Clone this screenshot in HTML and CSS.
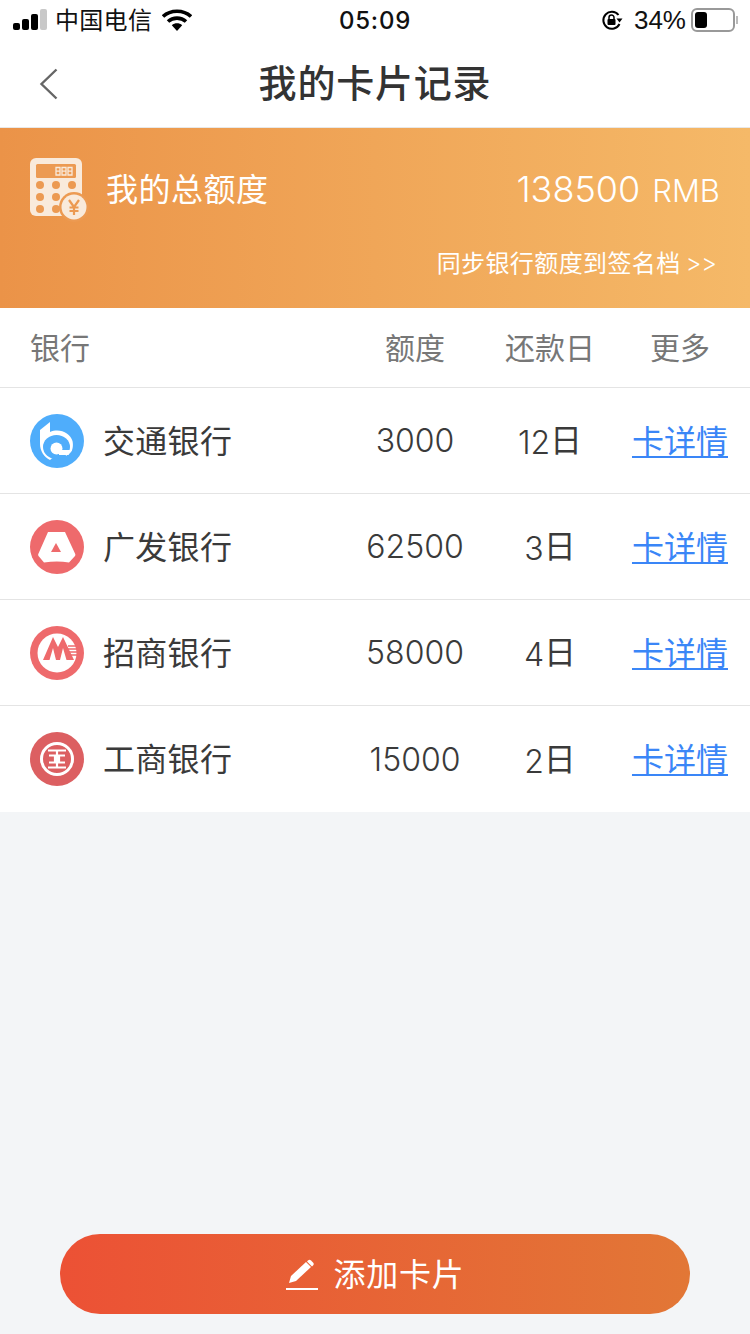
FILE: index.html
```html
<!DOCTYPE html>
<html lang="zh-CN">
<head>
<meta charset="UTF-8">
<title>我的卡片记录</title>
<link rel="stylesheet" href="styles.css">
</head>
<body>
<div class="page">

<div class="status">
  <div class="status-left">
    <svg class="signal" width="34" height="22" viewBox="0 0 34 22">
      <rect x="0" y="14" width="7" height="7" rx="2" fill="#000"/>
      <rect x="9" y="10" width="7" height="11" rx="2" fill="#000"/>
      <rect x="18" y="5" width="7" height="16" rx="2" fill="#000"/>
      <rect x="27" y="0" width="7" height="21" rx="2" fill="#c8c8c8"/>
    </svg>
    <span class="carrier">中国电信</span>
    <svg class="wifi" width="30" height="22" viewBox="0 0 30 22">
      <path d="M1 7.500C8.500 .5 21.500 .5 29 7.500" fill="none" stroke="#000" stroke-width="3.600"/>
      <path d="M6 12.500C11 8 19 8 24 12.500" fill="none" stroke="#000" stroke-width="3.600"/>
      <path d="M9.800 16.200C12.800 13.700 17.200 13.700 20.200 16.200L15 22Z" fill="#000"/>
    </svg>
  </div>
  <div class="status-time">05:09</div>
  <div class="status-right">
    <svg class="lock" width="22" height="22" viewBox="0 0 22 22">
      <path d="M17.500 6A8.500 8.500 0 1 0 18.500 15" fill="none" stroke="#000" stroke-width="2"/>
      <path d="M15.500 9.500L21.500 9.500L18.500 13.500Z" fill="#000"/>
      <rect x="6.500" y="10" width="8" height="6" rx="1" fill="#000"/>
      <path d="M8 10.500V8.500A2.500 2.500 0 0 1 13 8.500V10.500" fill="none" stroke="#000" stroke-width="1.500"/>
    </svg>
    <span>34%</span>
    <div class="battery"><div class="battery-fill"></div></div>
    <div class="battery-tip"></div>
  </div>
</div>

<div class="nav">
  <svg class="back" width="20" height="32" viewBox="0 0 20 32">
    <path d="M17.500 1.500L2.500 16L17.500 30.500" fill="none" stroke="#666" stroke-width="2.400"/>
  </svg>
  <h1>我的卡片记录</h1>
</div>

<div class="banner">
  <div class="banner-top">
    <svg class="calc" width="60" height="64" viewBox="0 0 60 64">
      <rect x="0" y="0" width="52" height="58" rx="6" fill="#f9eadb"/>
      <rect x="6" y="6" width="40" height="14" rx="1.500" fill="#ec9a52"/>
      <g fill="none" stroke="#f9eadb" stroke-width="1.300">
        <path d="M26 9.500H30V17H26ZM26 13.200H30"/>
        <path d="M32 9.500H36V17H32ZM32 13.200H36"/>
        <path d="M38 9.500H42V17H38ZM38 13.200H42"/>
      </g>
      <g fill="#ec9a52">
        <circle cx="10" cy="27" r="4"/>
        <circle cx="26" cy="27" r="4"/>
        <circle cx="42" cy="27" r="4"/>
        <circle cx="10" cy="39" r="4"/>
        <circle cx="26" cy="39" r="4"/>
        <circle cx="10" cy="51" r="4"/>
        <circle cx="26" cy="51" r="4"/>
      </g>
      <circle cx="44" cy="49" r="15" fill="#ec9a52"/>
      <circle cx="44" cy="49" r="12.500" fill="#f9eadb"/>
      <path d="M39 42L44 49L49 42M44 49V57M39.500 49.500H48.500M39.500 53H48.500" fill="none" stroke="#ec9a52" stroke-width="2.200"/>
    </svg>
    <span class="banner-label">我的总额度</span>
    <span class="banner-amount">138500<small>RMB</small></span>
  </div>
  <div class="banner-sync">同步银行额度到签名档<span class="arrows">&gt;&gt;</span></div>
</div>

<div class="table-head row-grid">
  <div>银行</div>
  <div class="cell">额度</div>
  <div class="cell">还款日</div>
  <div class="cell">更多</div>
</div>

<div class="rows">
  <div class="row row-grid">
    <div class="bank">
      <svg class="logo" width="54" height="54" viewBox="0 0 54 54">
        <circle cx="27" cy="27" r="27" fill="#4fadfb"/>
        <path d="M10 16L20 8V18C30 14 40 19 42.500 27C43.500 32 42.500 36 41 38L36 42H25L20 46C14 43 10 37 10 30Z" fill="#fff"/>
        <ellipse cx="26.500" cy="33" rx="13.500" ry="12" fill="#4fadfb"/>
        <circle cx="26.500" cy="34.500" r="6" fill="#fff"/>
        <path d="M29 36H42L38.500 41H29Z" fill="#fff"/>
      </svg>
      <span>交通银行</span>
    </div>
    <div class="cell">3000</div>
    <div class="cell date">12<span class="unit">日</span></div>
    <div class="cell more"><a href="#">卡详情</a></div>
  </div>
  <div class="row row-grid">
    <div class="bank">
      <svg class="logo" width="54" height="54" viewBox="0 0 54 54">
        <circle cx="27" cy="27" r="27" fill="#ee6a6c"/>
        <path d="M18 12H35L45 33.500C45.500 34.500 45.500 35 45 36L39 42.500C31 41 23 41 14 42.500L8.500 36C8 35 8 34.500 8.500 33.500Z" fill="#fff"/>
        <path d="M26 23L31 32H21Z" fill="#ee6a6c"/>
      </svg>
      <span>广发银行</span>
    </div>
    <div class="cell">62500</div>
    <div class="cell date">3<span class="unit">日</span></div>
    <div class="cell more"><a href="#">卡详情</a></div>
  </div>
  <div class="row row-grid">
    <div class="bank">
      <svg class="logo" width="54" height="54" viewBox="0 0 54 54">
        <circle cx="27" cy="27" r="27" fill="#ee6a6c"/>
        <circle cx="27" cy="27" r="19.500" fill="#fff"/>
        <path d="M13 34L23 11L28 21L33 11L44 34Z" fill="#ee6a6c"/>
        <path d="M19.500 34L23 22L26 34ZM30 34L33 22L36.500 34Z" fill="#fff"/>
        <path d="M38 20H47M38 23H47M39 26H47M40 29H47" stroke="#ee6a6c" stroke-width="1.400"/>
      </svg>
      <span>招商银行</span>
    </div>
    <div class="cell">58000</div>
    <div class="cell date">4<span class="unit">日</span></div>
    <div class="cell more"><a href="#">卡详情</a></div>
  </div>
  <div class="row row-grid">
    <div class="bank">
      <svg class="logo" width="54" height="54" viewBox="0 0 54 54">
        <circle cx="27" cy="27" r="27" fill="#dc5f61"/>
        <circle cx="27" cy="27" r="15.500" fill="none" stroke="#fff" stroke-width="3"/>
        <path d="M18 18.500H36M18 35.500H36M19 23.500H25V30.500H19M35 23.500H29V30.500H35M27 18.500V35.500" fill="none" stroke="#fff" stroke-width="2.200"/>
      </svg>
      <span>工商银行</span>
    </div>
    <div class="cell">15000</div>
    <div class="cell date">2<span class="unit">日</span></div>
    <div class="cell more"><a href="#">卡详情</a></div>
  </div>
</div>

<div class="spacer"></div>

<div class="footer">
  <button class="add-btn">
    <svg width="34" height="32" viewBox="0 0 34 32">
      <path d="M4 24L6 17L21 3L26 8L11 22Z" fill="#fff"/>
      <path d="M23 1.500C24 .5 25 .5 26 1.500L28 3.500C29 4.500 29 5.500 28 6.500L27 7.500L22 2.500Z" fill="#fff"/>
      <rect x="1" y="29" width="32" height="2" fill="#fff"/>
    </svg>
    <span>添加卡片</span>
  </button>
</div>

</div>
</body>
</html>
```

FILE: styles.css
```css
* {box-sizing:border-box;}
html, body {margin:0; padding:0;}
body {font-family:"Noto Sans CJK SC", "Noto Sans", sans-serif; background:#f3f5f7; color:#333;}
.page {width:750px; height:1334px; display:flex; flex-direction:column; overflow:hidden;}

/* status bar */
.status {height:42px; background:#fff; display:flex; align-items:center; justify-content:space-between; padding:0 12px 2px 13px; position:relative; color:#111; font-size:24px;}
.status-left {display:flex; align-items:center;}
.signal {margin-right:8px;}
.carrier {margin-top:-4px; letter-spacing:.3px;}
.wifi {margin-left:10px;}
.status-time {position:absolute; left:0; right:0; text-align:center; font-family:"Inter", "Liberation Sans", sans-serif; font-size:24px; font-weight:500; letter-spacing:.8px;}
.status-right {display:flex; align-items:center; font-family:"Liberation Sans", sans-serif; font-size:26px;}
.status-right span {margin-left:11px; margin-right:5px;}
.battery {width:44px; height:24px; border:2px solid #999; border-radius:6px; padding:2px;}
.battery-fill {width:12px; height:16px; background:#000; border-radius:3px;}
.battery-tip {width:2px; height:8px; background:#bbb; margin-left:1px;}

/* nav */
.nav {height:86px; background:#fff; display:flex; align-items:center; justify-content:center; position:relative; border-bottom:1px solid #e8e8e8;}
.nav h1 {margin:0 0 7px 0; font-size:38px; font-weight:500; color:#333; line-height:1; letter-spacing:.8px;}
.back {position:absolute; left:39px; top:26px;}

/* banner */
.banner {height:180px; background:linear-gradient(90deg, #eb9348, #f5b968); color:#fff; padding:30px 30px 0 30px;}
.banner-top {display:flex; align-items:flex-start;}
.calc {flex:none;}
.banner-label {font-size:32px; margin-left:16px; line-height:58px; letter-spacing:.5px;}
.banner-amount {margin-left:auto; font-size:36px; line-height:62px; font-weight:300; font-family:"Inter", sans-serif;}
.banner-amount small {font-size:31px; margin-left:12px;}
.banner-sync {text-align:right; font-size:24px; line-height:36px; margin-top:22px; padding-right:3px; letter-spacing:.4px;}
.arrows {font-family:"Inter", sans-serif; font-weight:300; margin-left:5px; letter-spacing:0;}

/* table */
.row-grid {display:grid; grid-template-columns:320px 130px 140px 120px; padding:0 10px 0 30px; align-items:center;}
.cell {text-align:center;}
.table-head {height:80px; background:#fff; font-size:30px; color:#777; border-bottom:1px solid #e4e4e4;}
.table-head div {margin-top:-4px;}
.rows {background:#fff;}
.row {height:106px; font-size:32px; color:#3a3a3a; border-bottom:1px solid #e4e4e4;}
.row:last-child {border-bottom:0;}
.row .cell {font-family:"Inter", "Noto Sans CJK SC", sans-serif; font-weight:300;}
.row .date, .row .more {margin-top:-4px;}
.row .bank span {margin-top:-4px; letter-spacing:.3px;}
.unit {font-weight:400; vertical-align:2px;}
.bank {display:flex; align-items:center;}
.logo {flex:none; margin-right:19px;}
.row a {color:#3a86f7; font-family:"Noto Sans CJK SC", sans-serif; font-weight:400; text-underline-offset:3px; text-decoration-thickness:2px;}

.spacer {flex:1;}
.footer {padding:0 60px 20px 60px;}
.add-btn {width:100%; height:80px; border:0; border-radius:40px; background:linear-gradient(90deg, #ec5135, #e27736); color:#fff; font-family:inherit; font-size:32px; display:flex; align-items:center; justify-content:center; padding:0;}
.add-btn span {margin-top:-4px; letter-spacing:.8px;}
.add-btn svg {margin-right:14px; margin-top:2px;}
```
